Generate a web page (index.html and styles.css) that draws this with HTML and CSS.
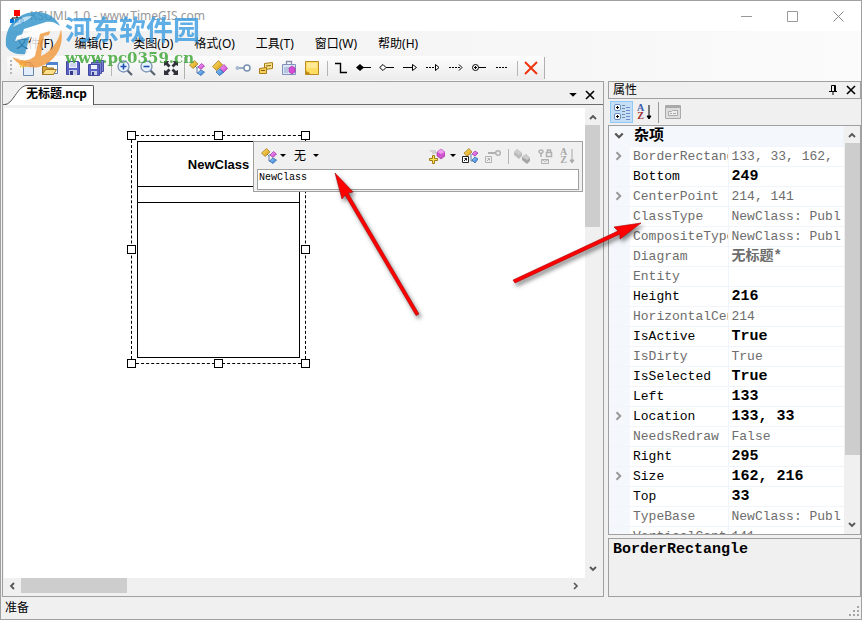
FILE: index.html
```html
<!DOCTYPE html>
<html lang="zh-CN">
<head>
<meta charset="utf-8">
<title>KSUML 1.0</title>
<link rel="stylesheet" href="styles.css">
</head>
<body>
<svg class="sprite" aria-hidden="true">
  <defs>
    <linearGradient id="gold" x1="0" y1="0" x2="1" y2="1"><stop offset="0" stop-color="#ffe070"/><stop offset="1" stop-color="#d59a10"/></linearGradient>
    <linearGradient id="pink" x1="0" y1="0" x2="1" y2="1"><stop offset="0" stop-color="#ffa0ff"/><stop offset="1" stop-color="#c040c8"/></linearGradient>
    <linearGradient id="blue" x1="0" y1="0" x2="1" y2="1"><stop offset="0" stop-color="#98d0ff"/><stop offset="1" stop-color="#2f78d0"/></linearGradient>
  </defs>
  <symbol id="i-new" viewBox="0 0 16 16"><path d="M4.500 2.500h7l3 3v10h-10z" fill="#e4eefb" stroke="#6a86ae"/><path d="M11.500 2.500v3h3" fill="#fff" stroke="#6a86ae"/><path d="M4 0v8M0 4h8M1 1l6 6M7 1L1 7" stroke="#f2bd22" stroke-width="1.300"/><circle cx="4" cy="4" r="1.600" fill="#fff6a0"/></symbol>
  <symbol id="i-open" viewBox="0 0 16 16"><path d="M4.500 2.500h11v11h-11z" fill="#fff" stroke="#5d7fb5"/><path d="M4 2h12v3H4z" fill="#4f82cf"/><path d="M.5 14.500v-8h4l1 1.500h6v6.500z" fill="#d9a43a" stroke="#93702a"/><path d="M.5 14.500l3-5h11l-3 5z" fill="#ffe08a" stroke="#a37a25"/></symbol>
  <symbol id="i-save" viewBox="0 0 16 16"><path d="M1.500 1.500h12l1 1v12h-13z" fill="#5a63c4" stroke="#4248a0"/><path d="M4 2h8v6H4z" fill="#edf1ff"/><path d="M5 4h6M5 6h6" stroke="#b0b8dc"/><path d="M4 10h8v5H4z" fill="#c9cfe8"/><path d="M5 11h3v4H5z" fill="#353b8c"/></symbol>
  <symbol id="i-saveall" viewBox="0 0 16 16"><path d="M5.500.5h10v11h-10z" fill="#7c84d2" stroke="#4a50a8"/><path d="M3.500 2.500h10v11h-10z" fill="#7c84d2" stroke="#4a50a8"/><path d="M.5 4.500h11v11H.5z" fill="#5a63c4" stroke="#4248a0"/><path d="M3 5h6v4H3z" fill="#edf1ff"/><path d="M3 11h6v4H3z" fill="#c9cfe8"/><path d="M4 12h2v3H4z" fill="#353b8c"/></symbol>
  <symbol id="i-zoomin" viewBox="0 0 16 16"><path d="M10 10l5 5" stroke="#5a6170" stroke-width="2.200"/><circle cx="6.500" cy="6.500" r="5.500" fill="#e8f2ff" stroke="#7c93b5" stroke-width="1.300"/><path d="M3.500 6.500h6M6.500 3.500v6" stroke="#1d4fae" stroke-width="1.600"/></symbol>
  <symbol id="i-zoomout" viewBox="0 0 16 16"><path d="M10 10l5 5" stroke="#5a6170" stroke-width="2.200"/><circle cx="6.500" cy="6.500" r="5.500" fill="#e8f2ff" stroke="#7c93b5" stroke-width="1.300"/><path d="M3.500 6.500h6" stroke="#1d4fae" stroke-width="1.600"/></symbol>
  <symbol id="i-fit" viewBox="0 0 16 16"><path d="M1 1h5L5 3l2.500 2.500-2 2L3 5 1 6zM15 1v5l-2-1-2.500 2.500-2-2L11 3l-1-2zM1 15v-5l2 1 2.500-2.500 2 2L5 13l1 2zM15 15h-5l1-2-2.500-2.500 2-2L13 11l2-1z" fill="#30343a"/></symbol>
  <symbol id="i-class" viewBox="0 0 16 16"><path d="M6 6l2 2v5h4M8 7h4" fill="none" stroke="#5b7cae"/><path d="M.5 5l5-4.500L9 4 4 8.500z" fill="url(#gold)" stroke="#9c7210" stroke-width=".7"/><path d="M9 7l3.500-3.500L15.500 6l-3.500 3.500z" fill="url(#pink)" stroke="#9a309c" stroke-width=".7"/><path d="M8.500 13l3.500-3 3.500 2-3.500 3.500z" fill="url(#blue)" stroke="#245fa5" stroke-width=".7"/></symbol>
  <symbol id="i-struct" viewBox="0 0 16 16"><path d="M.5 6.500l6-6L10.500 5l-6 5.500z" fill="url(#gold)" stroke="#9c7210" stroke-width=".7"/><path d="M8 8.500L12 4.500l3.500 4-4 4z" fill="url(#pink)" stroke="#9a309c" stroke-width=".7"/><path d="M4 12l4-3 3.500 3.500-4 3z" fill="url(#blue)" stroke="#245fa5" stroke-width=".7"/></symbol>
  <symbol id="i-iface" viewBox="0 0 16 16"><path d="M4 8h6" stroke="#7990b2" stroke-width="1.500"/><circle cx="2.500" cy="8" r="2" fill="#a9bad3"/><circle cx="12" cy="8" r="3" fill="#fff" stroke="#7990b2" stroke-width="1.500"/></symbol>
  <symbol id="i-enum" viewBox="0 0 16 16"><path d="M6.500 3.500l8-1v6l-8 1z" fill="#fbe28a" stroke="#a87d14"/><path d="M8 6l5-.5" stroke="#82600e"/><path d="M1.500 8.500l7-1v6h-7z" fill="#f6cf5c" stroke="#a87d14"/><path d="M3 10.500h4" stroke="#82600e"/></symbol>
  <symbol id="i-delegate" viewBox="0 0 16 16"><path d="M5.500 4V1.500h5V4" fill="none" stroke="#8993b0" stroke-width="1.300"/><path d="M1.500 4.500h13v10h-13z" fill="#dce5f6" stroke="#8090ba"/><path d="M3 8h5M3 10h4M3 12h4" stroke="#8fa6cc"/><path d="M8 8l3-2 3 2v4l-3 2-3-2z" fill="#d84bd4" stroke="#912e98" stroke-width=".6"/></symbol>
  <symbol id="i-note" viewBox="0 0 16 16"><path d="M1.500 1.500h13v13h-13z" fill="#ffdc62" stroke="#b98b22"/><path d="M2 10c1 3 3 1 4 4H2z" fill="#c08a18"/><path d="M3 3h10v5H3z" fill="#ffe994"/></symbol>
  <symbol id="i-assoc" viewBox="0 0 16 16"><path d="M2 3.500h5.500v9H14" fill="none" stroke="#000" stroke-width="1.400"/></symbol>
  <symbol id="i-comp" viewBox="0 0 16 16"><path d="M6 7.500h9" stroke="#000"/><path d="M0 7.500L4 4l4 3.500L4 11z"/></symbol>
  <symbol id="i-aggr" viewBox="0 0 16 16"><path d="M7 7.500h8" stroke="#000"/><path d="M.7 7.500L4 4.500l3 3-3 3z" fill="#fff" stroke="#000"/></symbol>
  <symbol id="i-gen" viewBox="0 0 16 16"><path d="M1 7.500h10" stroke="#000"/><path d="M10.500 4.500l4 3-4 3z" fill="#fff" stroke="#000"/></symbol>
  <symbol id="i-real" viewBox="0 0 16 16"><path d="M1 7.500h10" stroke="#000" stroke-dasharray="2 1"/><path d="M10.500 4.500l3.500 3-3.500 3z" fill="#fff" stroke="#000"/></symbol>
  <symbol id="i-dep" viewBox="0 0 16 16"><path d="M1 7.500h12" stroke="#000" stroke-dasharray="2 1"/><path d="M11 4.500l3 3-3 3" fill="none" stroke="#000"/></symbol>
  <symbol id="i-nest" viewBox="0 0 16 16"><path d="M7 7.500h8" stroke="#000"/><circle cx="4.500" cy="7.500" r="3" fill="#fff" stroke="#000"/><path d="M3 7.500h3M4.500 6v3" stroke="#000"/></symbol>
  <symbol id="i-comment" viewBox="0 0 16 16"><path d="M2 7.500h12" stroke="#000" stroke-dasharray="2 1"/></symbol>
  <symbol id="i-delete" viewBox="0 0 16 16"><path d="M2 2l12 12M14 2L2 14" stroke="#ee3510" stroke-width="2"/></symbol>
  <symbol id="i-caret" viewBox="0 0 6 4"><path d="M0 0h6L3 3z"/></symbol>
  <symbol id="i-addmember" viewBox="0 0 16 16"><path d="M1 3h6M3 5h4" stroke="#b5b5b5"/><path d="M8 4l4-3 4 3v4l-4 3-4-3z" fill="#d255d0" stroke="#8e2e96" stroke-width=".6"/><path d="M8 4l4 2 4-2-4-3z" fill="#f09af0"/><path d="M3.500 7.500h2v3h3v2h-3v3h-2v-3h-3v-2h3z" fill="#ffe35c" stroke="#a07c10"/></symbol>
  <symbol id="i-nestclass" viewBox="0 0 16 16"><path d="M9 6v7h4" fill="none" stroke="#5b7cae"/><path d="M2 5l5-4.500L10 4 5 8.500z" fill="url(#gold)" stroke="#9c7210" stroke-width=".7"/><path d="M10 6l3-3 3 2-3 3z" fill="url(#pink)" stroke="#9a309c" stroke-width=".7"/><path d="M10 12l3-3 3 2-3 4z" fill="url(#blue)" stroke="#245fa5" stroke-width=".7"/><path d="M.5 8.500h6v6h-6z" fill="#fff" stroke="#222"/><path d="M2 13l3-3M2.500 10.500H4.500v2" stroke="#222" fill="none"/></symbol>
  <symbol id="i-nestiface" viewBox="0 0 16 16"><g stroke="#b0b0b0" fill="none"><path d="M3 5h7" stroke-width="2"/><circle cx="13" cy="5" r="2.300" stroke-width="1.500"/><path d="M.5 8.500h6v6h-6zM2 13l3-3M2.500 10.500H4.500v2"/></g></symbol>
  <symbol id="i-cubes" viewBox="0 0 16 16"><path d="M0 4l3-3 5 4v3L5 11 0 7z" fill="#bbb"/><path d="M8 9l4-3 4 4v3l-3 3-5-4z" fill="#a5a5a5"/><path d="M0 4l3-3 5 4-3 2zM8 9l4-3 4 4-3 2z" fill="#ccc"/></symbol>
  <symbol id="i-access" viewBox="0 0 16 16"><g fill="none" stroke="#b0b0b0" stroke-width="1.500"><path d="M4 9V6M2 4a2 2 0 1 1 4 0L4 6z"/><path d="M9.500 4.500h5v4h-5zM10.500 4V2h3v2"/><path d="M4.500 11.500h7v4h-7zl3.500 2 3.500-2" stroke-width="1"/></g></symbol>
  <symbol id="i-arrowdown" viewBox="0 0 6 16"><path d="M3 1v13M1 12l2 3 2-3z" stroke="currentColor" fill="currentColor"/></symbol>
  <symbol id="i-cat" viewBox="0 0 18 18"><g fill="#fff" stroke="#6b8fc0"><rect x="1.500" y="1.500" width="6" height="6" rx="1.500"/><rect x="1.500" y="10.500" width="6" height="6" rx="1.500"/></g><path d="M3 4.500h3M4.500 3v3M3 13.500h3M4.500 12v3" stroke="#000"/><path d="M9 2.500h3M9 5.500h3M9 8.500h3M9 11.500h3M9 14.500h3" stroke="#7488a8"/><path d="M13 4.500h4M13 7.500h4M13 10.500h4M13 13.500h4M13 16.500h4" stroke="#7189cd"/></symbol>
  <symbol id="i-pages" viewBox="0 0 16 16"><path d="M.5 1.500h15v13H.5z" fill="#ddd" stroke="#aaa"/><path d="M1 2h14v2H1z" fill="#aaa"/><path d="M3.500 7.500h3l1-1h5v5h-9zM5 9.500h2M8 9.500h3" fill="#eee" stroke="#aaa"/></symbol>
  <symbol id="i-close" viewBox="0 0 10 10"><path d="M1 1l8 8M9 1L1 9" stroke="currentColor" stroke-width="1.600"/></symbol>
  <symbol id="i-up" viewBox="0 0 8 8"><path d="M1 6l3-3 3 3" fill="none" stroke="#555" stroke-width="1.800"/></symbol>
  <symbol id="i-down" viewBox="0 0 8 8"><path d="M1 2l3 3 3-3" fill="none" stroke="#555" stroke-width="1.800"/></symbol>
  <symbol id="i-left" viewBox="0 0 8 8"><path d="M6 1L3 4l3 3" fill="none" stroke="#555" stroke-width="1.800"/></symbol>
  <symbol id="i-right" viewBox="0 0 8 8"><path d="M2 1l3 3-3 3" fill="none" stroke="currentColor" stroke-width="1.600"/></symbol>
</svg>

<div class="window">
  <header class="titlebar">
    <svg class="app-icon" viewBox="0 0 14 13"><path d="M7 6v2M2 10V8h10v2" fill="none" stroke="#000"/><path d="M4 0h6v6H4z" fill="#f00"/><path d="M0 9h4v4H0zM5 9h4v4H5zM10 9h4v4h-4z" fill="#0070d8"/></svg>
    <span class="title">KSUML 1.0 - www.TimeGIS.com</span>
    <button class="win-btn" aria-label="最小化"><svg class="s11" viewBox="0 0 11 11"><path d="M0 5.500h11" stroke="#999"/></svg></button>
    <button class="win-btn" aria-label="最大化"><svg class="s11" viewBox="0 0 11 11"><path d="M.5.5h10v10H.5z" fill="none" stroke="#999"/></svg></button>
    <button class="win-btn" aria-label="关闭"><svg class="s11" viewBox="0 0 11 11"><path d="M.5.5l10 10M10.500.5l-10 10" stroke="#888"/></svg></button>
  </header>

  <nav class="menubar">
    <button>文件(F)</button><button>编辑(E)</button><button>类图(D)</button><button>格式(O)</button><button>工具(T)</button><button>窗口(W)</button><button>帮助(H)</button>
  </nav>

  <div class="toolbar-row"><div class="toolbar" role="toolbar">
    <span class="grip"></span>
    <button aria-label="新建"><svg><use href="#i-new"/></svg></button>
    <button aria-label="打开"><svg><use href="#i-open"/></svg></button>
    <button aria-label="保存"><svg><use href="#i-save"/></svg></button>
    <button aria-label="全部保存"><svg><use href="#i-saveall"/></svg></button>
    <span class="sep"></span>
    <button aria-label="放大"><svg><use href="#i-zoomin"/></svg></button>
    <button aria-label="缩小"><svg><use href="#i-zoomout"/></svg></button>
    <button aria-label="适合窗口"><svg><use href="#i-fit"/></svg></button>
    <span class="edge"></span>
    <button aria-label="类"><svg><use href="#i-class"/></svg></button>
    <button aria-label="结构"><svg><use href="#i-struct"/></svg></button>
    <button aria-label="接口"><svg><use href="#i-iface"/></svg></button>
    <button aria-label="枚举"><svg><use href="#i-enum"/></svg></button>
    <button aria-label="委托"><svg><use href="#i-delegate"/></svg></button>
    <button aria-label="注释"><svg><use href="#i-note"/></svg></button>
    <span class="sep"></span>
    <button aria-label="关联"><svg><use href="#i-assoc"/></svg></button>
    <button aria-label="组合"><svg><use href="#i-comp"/></svg></button>
    <button aria-label="聚合"><svg><use href="#i-aggr"/></svg></button>
    <button aria-label="泛化"><svg><use href="#i-gen"/></svg></button>
    <button aria-label="实现"><svg><use href="#i-real"/></svg></button>
    <button aria-label="依赖"><svg><use href="#i-dep"/></svg></button>
    <button aria-label="嵌套"><svg><use href="#i-nest"/></svg></button>
    <button aria-label="注释连接"><svg><use href="#i-comment"/></svg></button>
    <span class="sep"></span>
    <button aria-label="删除"><svg><use href="#i-delete"/></svg></button>
    <span class="edge"></span>
  </div></div>

  <main class="workspace">
    <section class="document">
      <div class="tabs">
        <button class="tab"><svg class="tab-slant" viewBox="0 0 22 20"><path d="M0 20C9 19 10 1 22 .5V20z" fill="#fff"/><path d="M0 19.500C4 19 6 16 9 12S16 .5 22 .5" fill="none" stroke="#555"/></svg><span class="tab-label">无标题.ncp</span></button>
        <span class="tab-fill"></span>
        <button class="tab-tool" aria-label="文档列表"><svg class="caret big"><use href="#i-caret"/></svg></button>
        <button class="tab-tool" aria-label="关闭文档"><svg class="s10"><use href="#i-close"/></svg></button>
      </div>
      <div class="view">
        <div class="canvas">
          <div class="selection">
            <i class="h nw"></i><i class="h n"></i><i class="h ne"></i><i class="h w"></i><i class="h e"></i><i class="h sw"></i><i class="h s"></i><i class="h se"></i>
            <div class="class-node"><h2>NewClass</h2><div class="fields"></div></div>
          </div>
          <div class="editor">
            <div class="editor-tools">
              <button class="drop" aria-label="类型"><svg><use href="#i-class"/></svg><svg class="caret"><use href="#i-caret"/></svg></button>
              <button class="drop word">无<svg class="caret"><use href="#i-caret"/></svg></button>
              <span class="grow"></span>
              <button class="drop wide" aria-label="添加成员"><svg><use href="#i-addmember"/></svg><svg class="caret"><use href="#i-caret"/></svg></button>
              <button aria-label="嵌套类"><svg><use href="#i-nestclass"/></svg></button>
              <button aria-label="嵌套接口"><svg><use href="#i-nestiface"/></svg></button>
              <span class="sep"></span>
              <button aria-label="按类型"><svg><use href="#i-cubes"/></svg></button>
              <button aria-label="按访问级别"><svg><use href="#i-access"/></svg></button>
              <button class="az off" aria-label="按名称"><span class="letters"><b>A</b><b>Z</b></span><svg class="down"><use href="#i-arrowdown"/></svg></button>
            </div>
            <input class="name-input" type="text" value="NewClass" aria-label="名称">
          </div>
        </div>
        <div class="vscroll"><svg class="s8"><use href="#i-up"/></svg><span class="vthumb"></span><svg class="s8 last"><use href="#i-down"/></svg></div>
        <div class="hscroll"><svg class="s8"><use href="#i-left"/></svg><span class="hthumb"></span><svg class="s8 last"><use href="#i-right"/></svg></div>
      </div>
    </section>

    <aside class="properties">
      <div class="panel-title"><span>属性</span>
        <button aria-label="自动隐藏"><svg class="s10" viewBox="0 0 10 10"><path d="M3.500 6V.5h4V6M1 6.500h8M5 7v3" fill="none" stroke="#000"/><path d="M6 1h1v5H6z"/></svg></button>
        <button aria-label="关闭"><svg class="s10"><use href="#i-close"/></svg></button></div>
      <div class="panel-tools">
        <button class="on" aria-label="按分类"><svg class="s18"><use href="#i-cat"/></svg></button>
        <button class="az" aria-label="按字母"><span class="letters"><b>A</b><b>Z</b></span><svg class="down"><use href="#i-arrowdown"/></svg></button>
        <span class="sep tall"></span>
        <button aria-label="属性页"><svg><use href="#i-pages"/></svg></button>
      </div>
      <div class="grid-box">
        <div class="rows">
          <table>
            <colgroup><col class="c-gutter"><col class="c-name"><col></colgroup>
            <tbody>
            <tr class="category"><th><svg class="s10"><use href="#i-down"/></svg></th><th colspan="2">杂项</th></tr>
            <tr class="ro"><td><svg class="s10"><use href="#i-right"/></svg></td><th>BorderRectangle</th><td>133, 33, 162,</td></tr>
            <tr><td></td><th>Bottom</th><td>249</td></tr>
            <tr class="ro"><td><svg class="s10"><use href="#i-right"/></svg></td><th>CenterPoint</th><td>214, 141</td></tr>
            <tr class="ro"><td></td><th>ClassType</th><td>NewClass: Publ</td></tr>
            <tr class="ro"><td></td><th>CompositeType</th><td>NewClass: Publ</td></tr>
            <tr class="ro strong"><td></td><th>Diagram</th><td>无标题*</td></tr>
            <tr class="ro"><td></td><th>Entity</th><td></td></tr>
            <tr><td></td><th>Height</th><td>216</td></tr>
            <tr class="ro"><td></td><th>HorizontalCenter</th><td>214</td></tr>
            <tr><td></td><th>IsActive</th><td>True</td></tr>
            <tr class="ro"><td></td><th>IsDirty</th><td>True</td></tr>
            <tr><td></td><th>IsSelected</th><td>True</td></tr>
            <tr><td></td><th>Left</th><td>133</td></tr>
            <tr><td><svg class="s10"><use href="#i-right"/></svg></td><th>Location</th><td>133, 33</td></tr>
            <tr class="ro"><td></td><th>NeedsRedraw</th><td>False</td></tr>
            <tr><td></td><th>Right</th><td>295</td></tr>
            <tr><td><svg class="s10"><use href="#i-right"/></svg></td><th>Size</th><td>162, 216</td></tr>
            <tr><td></td><th>Top</th><td>33</td></tr>
            <tr class="ro"><td></td><th>TypeBase</th><td>NewClass: Publ</td></tr>
            <tr class="ro"><td></td><th>VerticalCenter</th><td>141</td></tr>
            </tbody>
          </table>
        </div>
        <div class="vscroll props-scroll"><svg class="s8"><use href="#i-up"/></svg><span class="vthumb"></span><svg class="s8 last"><use href="#i-down"/></svg></div>
      </div>
      <div class="description">BorderRectangle</div>
    </aside>
  </main>

  <footer class="statusbar"><span>准备</span>
    <svg class="size-grip" viewBox="0 0 11 11"><path d="M8 0h2v2H8zM4 4h2v2H4zM8 4h2v2H8zM0 8h2v2H0zM4 8h2v2H4zM8 8h2v2H8z" fill="#a5a5a5"/></svg></footer>

  <div class="watermark">
    <svg class="wm-logo" viewBox="0 0 60 60">
      <path d="M2 36C0 14 16 2 32 2c12 0 20 6 24 14-5-4-9-5-14-4L20 19l-3 8 9-2-5 19C12 45 5 42 2 36z" fill="#3394cb"/>
      <path d="M57 19c4 18-7 34-22 38-11 2-21-2-27-10 8 4 18 1 22-4l4-22 13-4-2 8-5 1-3 20c10-4 18-15 20-27z" fill="#f29a3e"/>
      <path d="M13 26l36-12-3 7-10 3-5 22c-4 4-11 6-17 3 6-2 9-5 10-9l4-14-17 5z" fill="#fff"/>
      <path d="M9 17c4-8 12-11 19-11-4 5-11 7-19 11z" fill="#b9dcf0"/>
    </svg>
    <div><div class="wm-name">河东软件园</div><div class="wm-url">www.pc0359.cn</div></div>
  </div>

  <svg class="arrows" viewBox="0 0 330 160">
    <g fill="#f00" stroke="#a40000" stroke-width=".6">
      <path d="M5 2l18 19-5 1 71 121-3 1.500L15 24l-3 4z"/>
      <path d="M311 52l-21 16 0-5-105 49-2-3 105-49-4-4z"/>
    </g>
  </svg>
</div>
</body>
</html>
```

FILE: styles.css
```css
* { box-sizing: border-box; }
body { margin: 0; font: 12px/16px "Noto Sans", "Noto Sans CJK SC", sans-serif; color: #000; }
button { display: flex; align-items: center; justify-content: center; padding: 0; border: 0; background: none; font: inherit; color: inherit; }
svg { display: block; flex: none; width: 16px; height: 16px; }
.sprite { position: absolute; width: 0; height: 0; }
svg.s8 { width: 8px; height: 8px; }
svg.s10 { width: 10px; height: 10px; }
svg.s11 { width: 11px; height: 11px; }
svg.s18 { width: 18px; height: 18px; }
svg.caret { width: 6px; height: 4px; }
svg.caret.big { width: 8px; height: 5px; }

.window { position: relative; display: flex; flex-direction: column; height: 100vh; border: 1px solid #a0a0a0; background: #f0f0f0; overflow: hidden; }

.titlebar { display: flex; align-items: center; height: 30px; padding-left: 9px; background: #fff; color: #999; }
.titlebar .app-icon { width: 14px; height: 13px; }
.title { flex: 1; padding-left: 6px; }
.win-btn { width: 46px; height: 30px; }

.menubar { display: flex; gap: 21px; height: 25px; padding-left: 15px; background: linear-gradient(90deg, #f0f0f0, #fbfbfb); }

.toolbar-row { height: 25px; background: linear-gradient(90deg, #f0f0f0, #fbfbfb); }
.toolbar { display: flex; align-items: center; width: max-content; height: 24px; margin-left: 6px; background: linear-gradient(#fdfdfd, #ececec); border-radius: 3px; }
.toolbar button { width: 23px; height: 22px; }
.grip { width: 2px; height: 16px; margin: 0 3px; background: repeating-linear-gradient(#b5b5b5 0 2px, transparent 2px 4px); }
.sep { width: 1px; height: 15px; margin: 0 1px 0 4px; background: #b5b5b5; }
.edge { width: 1px; height: 22px; margin: 0 0 0 2px; background: #b0b0b0; }

.workspace { flex: 1; display: grid; grid-template-columns: minmax(0, 1fr) 253px; gap: 4px; min-height: 0; }
.document { display: flex; flex-direction: column; min-height: 0; margin-left: 1px; border: 1px solid #a0a0a0; }

.tabs { display: flex; align-items: stretch; height: 23px; padding-top: 3px; background: linear-gradient(#6d6d6d, #6d6d6d) bottom / 100% 1px no-repeat; }
.tab { align-items: stretch; padding-left: 2px; font-weight: 700; }
.tab .tab-slant { width: 22px; height: 20px; margin-right: -1px; }
.tab-label { padding-right: 6px; border: 1px solid #555; border-width: 1px 1px 0 0; border-top-right-radius: 2px; background: #fff; }
.tab-fill { flex: 1; }
.tab-tool { width: 17px; }
.tabs .tab-tool:last-child { margin-right: 5px; }

.view { flex: 1; display: grid; grid-template-columns: minmax(0, 1fr) 18px; grid-template-rows: minmax(0, 1fr) 18px; min-height: 0; padding: 3px 0 0 1px; }
.canvas { position: relative; overflow: hidden; background: #fff; }
.vscroll { display: flex; flex-direction: column; align-items: center; width: 15px; padding: 5px 0; }
.vthumb { width: 15px; height: 102px; margin-top: 4px; background: #cdcdcd; }
.hscroll { display: flex; align-items: center; height: 15px; padding: 0 5px 0 4px; color: #555; }
.hthumb { width: 106px; height: 15px; margin-left: 5px; background: #cdcdcd; }
.vscroll .last { margin-top: auto; }
.hscroll .last { margin-left: auto; }

/* selected class on the free canvas */
.selection { position: absolute; left: 127px; top: 27px; width: 175px; height: 229px; padding: 5px; border: 1px dashed #000; }
.class-node { height: 217px; border: 1px solid #000; background: #fff; }
.class-node h2 { margin: 0; height: 45px; font: 700 13px/45px "Liberation Sans", sans-serif; text-align: center; border-bottom: 1px solid #000; }
.fields { height: 16px; border-bottom: 1px solid #000; }
.h { position: absolute; width: 9px; height: 9px; border: 1px solid #000; background: #fff; }
.nw, .n, .ne { top: -5px; }
.sw, .s, .se { bottom: -5px; }
.w, .e { top: calc(50% - 5px); }
.nw, .w, .sw { left: -5px; }
.ne, .e, .se { right: -5px; }
.n, .s { left: calc(50% - 5px); }

.editor { position: absolute; left: 249px; top: 33px; width: 330px; padding: 1px 3px; border: 1px solid #a0a0a0; background: #f0f0f0; }
.editor-tools { display: flex; align-items: center; height: 26px; }
.editor-tools button { width: 23px; height: 24px; }
.editor-tools .drop { width: auto; gap: 3px; padding: 0 4px; }
.editor-tools .word { gap: 7px; }
.editor-tools .wide { gap: 5px; padding: 0 2px; }
.grow { flex: 1; }
.name-input { display: block; width: 100%; height: 21px; padding: 0 1px 4px; border: 1px solid #a0a0a0; background: #fff; font: 10px/12px "Liberation Mono", monospace; color: #000; }

.az { gap: 2px; }
.letters { display: flex; flex-direction: column; font: 700 10px/8px "Liberation Serif", serif; }
.letters b:first-child { color: #3558a8; }
.letters b:last-child { color: #a03030; }
svg.down { width: 6px; height: 16px; }
.off, .off .letters b:first-child, .off .letters b:last-child { color: #a8a8a8; }

.properties { display: flex; flex-direction: column; min-height: 0; min-width: 0; }
.panel-title { display: flex; align-items: center; flex: none; height: 18px; padding-left: 4px; border: 1px solid #a0a0a0; }
.panel-title span { flex: 1; }
.panel-title button { width: 18px; height: 16px; }
.panel-tools { display: flex; align-items: center; flex: none; height: 26px; padding-left: 2px; }
.panel-tools button { width: 23px; height: 22px; }
.panel-tools .on { border: 1px solid #90c8f6; background: #c4def5; }
.tall { height: 21px; margin: 0 2px; background: #999; }

.grid-box { display: flex; flex: 1; min-height: 0; border: 1px solid #a0a0a0; overflow: hidden; }
.rows { flex: 1; min-width: 0; overflow: hidden; background: #f4f7fc; }
.props-scroll { width: 16px; padding: 5px 0; }
.props-scroll .vthumb { height: 312px; }
table { width: 100%; table-layout: fixed; border-collapse: collapse; font: 13px/19px "Liberation Mono", "Noto Sans CJK SC", monospace; }
.c-gutter { width: 21px; }
.c-name { width: 98px; }
tr { height: 20px; }
th, td { height: 20px; padding: 0; font-weight: 400; text-align: left; white-space: nowrap; overflow: hidden; border-bottom: 1px solid #f0f4fb; }
td:nth-child(n+2), th { background: #fff; }
th { padding-left: 3px; border-right: 1px solid #f0f4fb; }
td:last-child { padding-left: 3px; font-size: 15px; font-weight: 700; }
.ro { color: #6d6d6d; }
.ro td:last-child { font-size: 13px; font-weight: 400; }
.strong td:last-child { font-size: 14px; font-weight: 700; }
td:first-child, .category th { background: #f4f7fc; }
td:first-child { color: #999; }
td:first-child svg, .category svg { margin-left: 5px; }
.category th { padding: 2px 0 0 4px; font-size: 15px; line-height: 17px; font-weight: 700; }
.category th:first-child { padding: 0; border: 0; }
.description { flex: none; height: 59px; margin-top: 3px; padding: 2px 4px; border: 1px solid #a0a0a0; font: 700 15px/18px "Liberation Mono", monospace; }

.statusbar { display: flex; align-items: center; height: 22px; padding-left: 4px; }
.statusbar .size-grip { width: 11px; height: 11px; margin: 6px 1px 0 auto; }

/* overlays */
.watermark { position: absolute; left: 3px; top: 9px; display: flex; gap: 1px; pointer-events: none; opacity: .82; }
.watermark .wm-logo { width: 60px; height: 60px; }
.wm-name { font: 700 27px/38px "Noto Sans CJK SC", sans-serif; color: #3d9de0; }
.wm-url { font: 700 15px/20px "DejaVu Serif", serif; color: #3da535; }
.arrows { position: absolute; left: 329px; top: 170px; width: 330px; height: 160px; pointer-events: none; filter: drop-shadow(2px 3px 2px rgba(0, 0, 0, .5)); }
```
